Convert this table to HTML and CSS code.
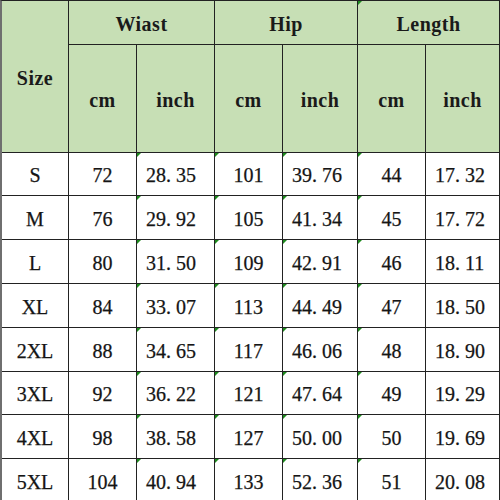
FILE: index.html
```html
<!DOCTYPE html>
<html>
<head>
<meta charset="utf-8">
<link rel="stylesheet" href="styles.css">
</head>
<body>
<div class="sheet">
  <div class="cell head size">Size</div>
  <div class="cell head group">Wiast</div>
  <div class="cell head group">Hip</div>
  <div class="cell head group mark">Length</div>
  <div class="cell head">cm</div>
  <div class="cell head">inch</div>
  <div class="cell head">cm</div>
  <div class="cell head">inch</div>
  <div class="cell head">cm</div>
  <div class="cell head">inch</div>

  <div class="cell">S</div><div class="cell">72</div><div class="cell dec mark">28<span class="dot">.</span>35</div><div class="cell mark">101</div><div class="cell dec mark">39<span class="dot">.</span>76</div><div class="cell mark">44</div><div class="cell dec">17<span class="dot">.</span>32</div>
  <div class="cell">M</div><div class="cell">76</div><div class="cell dec mark">29<span class="dot">.</span>92</div><div class="cell mark">105</div><div class="cell dec mark">41<span class="dot">.</span>34</div><div class="cell mark">45</div><div class="cell dec">17<span class="dot">.</span>72</div>
  <div class="cell">L</div><div class="cell">80</div><div class="cell dec mark">31<span class="dot">.</span>50</div><div class="cell mark">109</div><div class="cell dec mark">42<span class="dot">.</span>91</div><div class="cell mark">46</div><div class="cell dec">18<span class="dot">.</span>11</div>
  <div class="cell">XL</div><div class="cell">84</div><div class="cell dec mark">33<span class="dot">.</span>07</div><div class="cell mark">113</div><div class="cell dec mark">44<span class="dot">.</span>49</div><div class="cell mark">47</div><div class="cell dec">18<span class="dot">.</span>50</div>
  <div class="cell">2XL</div><div class="cell">88</div><div class="cell dec mark">34<span class="dot">.</span>65</div><div class="cell mark">117</div><div class="cell dec mark">46<span class="dot">.</span>06</div><div class="cell mark">48</div><div class="cell dec">18<span class="dot">.</span>90</div>
  <div class="cell">3XL</div><div class="cell">92</div><div class="cell dec mark">36<span class="dot">.</span>22</div><div class="cell mark">121</div><div class="cell dec mark">47<span class="dot">.</span>64</div><div class="cell mark">49</div><div class="cell dec">19<span class="dot">.</span>29</div>
  <div class="cell">4XL</div><div class="cell">98</div><div class="cell dec mark">38<span class="dot">.</span>58</div><div class="cell mark">127</div><div class="cell dec mark">50<span class="dot">.</span>00</div><div class="cell mark">50</div><div class="cell dec">19<span class="dot">.</span>69</div>
  <div class="cell">5XL</div><div class="cell">104</div><div class="cell dec mark">40<span class="dot">.</span>94</div><div class="cell mark">133</div><div class="cell dec mark">52<span class="dot">.</span>36</div><div class="cell mark">51</div><div class="cell dec">20<span class="dot">.</span>08</div>
</div>
</body>
</html>
```
FILE: styles.css
```css
html, body {
  margin: 0;
  padding: 0;
  background: #ffffff;
  overflow: hidden;
}

.sheet {
  display: grid;
  grid-template-columns: 66px 67px 77px 67px 74px 67px 73px;
  grid-template-rows: 43px 107px 42px 43px 43px 43px 43px 42px 43px 43px;
  gap: 1px;
  width: 497px;
  background: #222222;
  border-left: 2px solid #6f6f6f;
  border-right: 1px solid #222222;
  border-top: 1px solid #222222;
  font-family: "Liberation Serif", "Times New Roman", serif;
  font-size: 20px;
  color: #151515;
}

.cell {
  position: relative;
  display: flex;
  align-items: center;
  justify-content: center;
  background: #ffffff;
  padding-top: 3px;
  box-sizing: border-box;
  -webkit-text-stroke: 0.25px #151515;
}

.head {
  background: #c7dfb5;
  font-weight: bold;
  color: #1a1a1a;
  -webkit-text-stroke: 0;
  letter-spacing: 0.5px;
}

.size {
  grid-row: span 2;
}

.group {
  grid-column: span 2;
}

.dec {
  justify-content: flex-start;
  padding-left: 9px;
}

.dot {
  padding-right: 5px;
}

.mark::before {
  content: "";
  position: absolute;
  left: 0;
  top: 0;
  width: 0;
  height: 0;
  border-top: 4px solid #1d8a1d;
  border-right: 4px solid transparent;
}
```
